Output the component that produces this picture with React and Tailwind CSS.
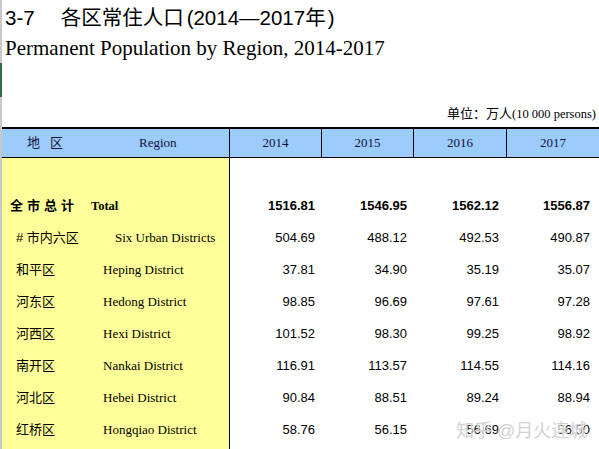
const rows = [
  { zh: "# 市内六区", en: "Six Urban Districts", v: ["504.69", "488.12", "492.53", "490.87"] },
  { zh: "和平区", en: "Heping District", v: ["37.81", "34.90", "35.19", "35.07"] },
  { zh: "河东区", en: "Hedong District", v: ["98.85", "96.69", "97.61", "97.28"] },
  { zh: "河西区", en: "Hexi District", v: ["101.52", "98.30", "99.25", "98.92"] },
  { zh: "南开区", en: "Nankai District", v: ["116.91", "113.57", "114.55", "114.16"] },
  { zh: "河北区", en: "Hebei District", v: ["90.84", "88.51", "89.24", "88.94"] },
  { zh: "红桥区", en: "Hongqiao District", v: ["58.76", "56.15", "56.69", "56.50"] },
];

const sans = "font-['Liberation_Sans','Noto_Sans_CJK_SC',sans-serif]";
const serif = "font-['Liberation_Serif','Noto_Sans_CJK_SC',serif]";
const colW = ["w-[92px]", "w-[92px]", "w-[93px]", "flex-1"];
const endPad = ["pr-[7px]", "pr-[7px]", "pr-[8px]", "pr-[9px]"];

function NumCells({ values, bold = false }) {
  return values.map((n, i) => (
    <div
      key={i}
      className={`${colW[i]} ${endPad[i]} flex items-center justify-end text-[13px] ${sans} ${bold ? "font-bold" : ""}`}
    >
      {n}
    </div>
  ));
}

export default function App() {
  return (
    <div className="relative flex h-[449px] w-[599px] overflow-hidden bg-white text-black">
      {/* sheet edge */}
      <div className="flex w-[2px] flex-col bg-[#c8c8c8]">
        <div className="mt-[63px] h-[34px] bg-[#2f6b47]" />
      </div>

      <div className="flex flex-1 flex-col">
        <div className={`pl-[3px] pt-[5px] text-[20.5px] leading-[26px] ${sans}`}>
          3-7<span className="ml-[26px]">各区常住人口</span>
          <span className="ml-[3px]">(2014—2017年</span>
          <span className="ml-[2px]">)</span>
        </div>
        <div className={`pl-[3px] pt-[4px] text-[21px] leading-[26px] ${serif}`}>
          Permanent Population by Region, 2014-2017
        </div>

        <div className="mb-[4px] mt-[44px] flex h-[18px] items-center justify-end pr-[3px]">
          <span className={`text-[13px] ${sans}`}>单位：万人</span>
          <span className={`text-[12.5px] ${serif}`}>(10 000 persons)</span>
        </div>

        {/* header */}
        <div className="flex h-[31px] border-t-2 border-b border-black bg-[#9cccfc] text-[13px] text-[#101038]">
          <div className="flex w-[228px] items-center border-r border-black">
            <span className={`ml-[25px] tracking-[10px] ${sans}`}>地区</span>
            <span className={`ml-[66px] ${serif}`}>Region</span>
          </div>
          {["2014", "2015", "2016", "2017"].map((y, i) => (
            <div
              key={y}
              className={`${colW[i]} flex items-center justify-center ${serif} ${i < 3 ? "border-r border-black" : ""}`}
            >
              {y}
            </div>
          ))}
        </div>

        {/* body */}
        <div className="flex flex-1 flex-col">
          <div className="flex h-[32px]">
            <div className="w-[228px] border-r border-black bg-[#ffff99]" />
          </div>
          <div className="flex h-[32px]">
            <div className="flex w-[228px] items-center border-r border-black bg-[#ffff99] font-bold">
              <span className={`ml-[8px] text-[13px] tracking-[4px] ${sans}`}>全市总计</span>
              <span className={`ml-[13px] text-[12.5px] ${serif}`}>Total</span>
            </div>
            <NumCells values={["1516.81", "1546.95", "1562.12", "1556.87"]} bold />
          </div>
          {rows.map((r) => (
            <div key={r.zh} className="flex h-[32px]">
              <div className="flex w-[228px] items-center border-r border-black bg-[#ffff99]">
                <span className={`w-[101px] shrink-0 pl-[14px] text-[13px] ${sans}`}>{r.zh}</span>
                <span className={`text-[13px] ${serif} ${r.en === "Six Urban Districts" ? "ml-[12px]" : ""}`}>
                  {r.en}
                </span>
              </div>
              <NumCells values={r.v} />
            </div>
          ))}
          <div className="flex flex-1">
            <div className="w-[228px] border-r border-black bg-[#ffff99]" />
          </div>
        </div>
      </div>

      <div
        className={`pointer-events-none absolute left-[456px] top-[418px] text-[18px] text-[#d2d2d2] ${sans}`}
        style={{ textShadow: "0 0 2px #fff" }}
      >
        知乎 @月火连城
      </div>
    </div>
  );
}
